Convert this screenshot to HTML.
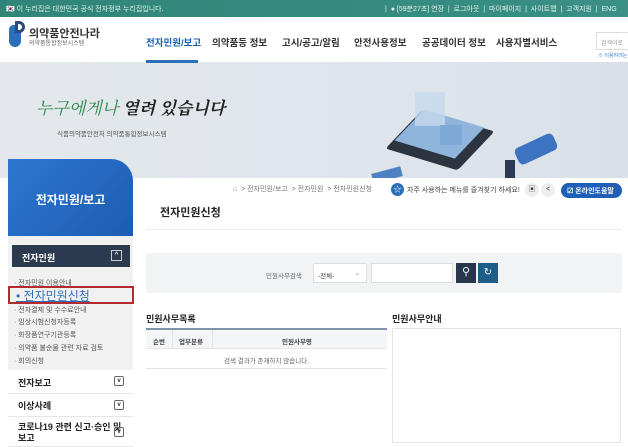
<!DOCTYPE html>
<html><head><meta charset="utf-8"><style>
*{margin:0;padding:0;box-sizing:border-box}
body{width:628px;height:439px;overflow:hidden;font-family:"Liberation Sans","Noto Sans CJK KR",sans-serif;background:#fff;position:relative;color:#333}
.a{position:absolute;white-space:nowrap}
.top{left:0;top:0;width:628px;height:17px;background:linear-gradient(90deg,#2f8577,#3a8f86);color:#e8f3ef;font-size:7px}
.nav{font-size:9.5px;font-weight:bold;color:#333;top:35px}
.li{font-size:7px;color:#555;left:16px}
.side{left:8px;width:125px;background:#fff;border-bottom:1px solid #e6e6e6;font-size:9px;font-weight:bold;color:#222;padding-left:10px}
.chev{position:absolute;right:9px;width:10px;height:10px;border:1px solid #666;border-radius:2px;font-size:6px;text-align:center;line-height:8px;color:#333}
</style></head><body>
<div class="a top"><span class="a" style="left:6px;top:4px">🇰🇷 이 누리집은 대한민국 공식 전자정부 누리집입니다.</span>
<span class="a" style="left:385px;top:4px">|&nbsp; ● [59분27초] 연장 &nbsp;|&nbsp; 로그아웃 &nbsp;|&nbsp; 마이페이지 &nbsp;|&nbsp; 사이트맵 &nbsp;|&nbsp; 고객지원 &nbsp;|&nbsp; ENG</span></div>
<div class="a" style="left:9px;top:25px;width:12px;height:22px;border:3px solid #2a6fb8;border-radius:6px 6px 8px 8px;background:#2a6fb8"></div>
<div class="a" style="left:15px;top:21px;width:10px;height:12px;border:3px solid #2a4b7c;border-radius:0 6px 6px 0;background:#fff"></div>
<div class="a" style="left:29px;top:25px;font-size:11px;font-weight:bold;color:#333">의약품안전나라</div>
<div class="a" style="left:29px;top:38px;font-size:6px;color:#666">의약품통합정보시스템</div>
<div class="a nav" style="left:146px;color:#1a5fb4">전자민원/보고</div>
<div class="a nav" style="left:212px">의약품등 정보</div>
<div class="a nav" style="left:282px">고시/공고/알림</div>
<div class="a nav" style="left:354px">안전사용정보</div>
<div class="a nav" style="left:422px">공공데이터 정보</div>
<div class="a nav" style="left:496px">사용자별서비스</div>
<div class="a" style="left:596px;top:32px;width:40px;height:18px;border:1px solid #ddd;font-size:6px;color:#999;padding:5px 4px">검색어로</div>
<div class="a" style="left:598px;top:52px;font-size:5px;color:#3a7bd5">※ 이용하려는</div>
<div class="a" style="left:0;top:62px;width:628px;height:116px;background:linear-gradient(90deg,#e4e8ec,#dfe5eb 60%,#d9e0e7)"></div>
<div class="a" style="left:146px;top:60px;width:52px;height:3px;background:#2a6fb8"></div>
<div class="a" style="left:36px;top:94px;font-size:17px;font-style:italic;font-family:'Liberation Serif','Noto Serif CJK SC',serif;color:#1e5a3a"><span style="color:#2e8a4a">누구에게나</span> <span style="font-weight:bold;color:#222">열려 있습니다</span></div>
<div class="a" style="left:57px;top:128px;font-size:6.5px;color:#555">식품의약품안전처 의약품통합정보시스템</div>
<div class="a" style="left:395px;top:120px;width:90px;height:40px;background:#2c3440;transform:skewX(-35deg) rotate(14deg);border-radius:3px"></div>
<div class="a" style="left:402px;top:118px;width:75px;height:32px;background:#8fb5dc;transform:skewX(-35deg) rotate(14deg)"></div>
<div class="a" style="left:415px;top:92px;width:30px;height:34px;background:#c5d9ec;opacity:.8"></div>
<div class="a" style="left:440px;top:125px;width:22px;height:20px;background:#7ea9d6"></div>
<div class="a" style="left:515px;top:140px;width:42px;height:18px;background:#3c74c2;border-radius:5px;transform:rotate(-25deg)"></div>
<div class="a" style="left:505px;top:160px;width:10px;height:18px;background:#2a3a55"></div>
<div class="a" style="left:372px;top:170px;width:30px;height:10px;background:#4e80c4;transform:rotate(-15deg)"></div>
<div class="a" style="left:8px;top:159px;width:125px;height:77px;background:linear-gradient(135deg,#2d77d0,#1d5cb4);border-radius:0 22px 0 0;color:#fff;font-size:12px;font-weight:bold;text-align:center;padding-top:32px">전자민원/보고</div>
<div class="a" style="left:133px;top:178px;width:495px;height:261px;background:#fff"></div>
<div class="a" style="left:8px;top:236px;width:125px;height:134px;background:#f1f1f1"></div>
<div class="a" style="left:12px;top:245px;width:118px;height:22px;background:#2b3a4f;color:#fff;font-size:9px;font-weight:bold;padding:6px 0 0 10px">전자민원<span style="position:absolute;right:8px;top:5px;width:11px;height:11px;border:1px solid #ccc;font-size:6px;text-align:center;line-height:9px">^</span></div>
<div class="a li" style="top:278px;left:14px">· 전자민원 이용안내</div>
<div class="a" style="left:8px;top:286px;width:126px;height:18px;border:2px solid #b42a2f"></div>
<div class="a" style="left:16px;top:287px;font-size:12px;color:#2a6fb8;text-decoration:underline">• 전자민원신청</div>
<div class="a li" style="top:305px;left:14px">· 전자결제 및 수수료안내</div>
<div class="a li" style="top:317px;left:14px">· 임상시험신청자등록</div>
<div class="a li" style="top:330px;left:14px">· 화장품연구기관등록</div>
<div class="a li" style="top:343px;left:14px">· 의약품 불순물 관련 자료 검토</div>
<div class="a li" style="top:356px;left:14px">· 회의신청</div>
<div class="a side" style="top:370px;height:24px;padding-top:6px">전자보고<span class="chev" style="top:6px">v</span></div>
<div class="a side" style="top:394px;height:23px;padding-top:5px">이상사례<span class="chev" style="top:6px">v</span></div>
<div class="a side" style="top:417px;height:30px;padding-top:5px;line-height:11px">코로나19 관련 신고·승인 및<br>보고<span class="chev" style="top:10px">v</span></div>
<div class="a" style="left:233px;top:184px;font-size:7px;color:#777">⌂ &nbsp;&gt; 전자민원/보고 &nbsp;&gt; 전자민원 &nbsp;&gt; 전자민원신청</div>
<div class="a" style="left:391px;top:183px;width:13px;height:13px;border-radius:50%;background:#2a6fb8;color:#fff;font-size:8px;text-align:center;line-height:13px">☆</div>
<div class="a" style="left:407px;top:185px;font-size:7px;color:#444">자주 사용하는 메뉴를 즐겨찾기 하세요!</div>
<div class="a" style="left:525px;top:183px;width:14px;height:14px;border-radius:50%;background:#eee;font-size:7px;text-align:center;line-height:14px">▣</div>
<div class="a" style="left:541px;top:183px;width:14px;height:14px;border-radius:50%;background:#eee;font-size:7px;text-align:center;line-height:14px">&lt;</div>
<div class="a" style="left:561px;top:183px;width:61px;height:15px;border-radius:8px;background:#1f5fb8;color:#fff;font-size:7px;font-weight:bold;padding:3px 0 0 6px">☑ 온라인도움말</div>
<div class="a" style="left:160px;top:204px;font-size:11px;font-weight:bold;color:#222">전자민원신청</div>
<div class="a" style="left:146px;top:229px;width:476px;height:1px;background:#eee"></div>
<div class="a" style="left:146px;top:253px;width:476px;height:40px;background:#f2f3f5;border-radius:3px"></div>
<div class="a" style="left:266px;top:270px;font-size:6.5px;color:#666">민원사무검색</div>
<div class="a" style="left:313px;top:263px;width:54px;height:20px;background:#fff;border:1px solid #ddd;font-size:6.5px;color:#444;padding:6px 4px">-전체-<span style="position:absolute;right:6px;top:5px;color:#888">⌄</span></div>
<div class="a" style="left:371px;top:263px;width:82px;height:20px;background:#fff;border:1px solid #ddd"></div>
<div class="a" style="left:456px;top:263px;width:20px;height:20px;background:#27364b;color:#fff;font-size:11px;text-align:center;line-height:19px">⚲</div>
<div class="a" style="left:478px;top:263px;width:20px;height:20px;background:#1d5d86;color:#fff;font-size:10px;text-align:center;line-height:19px">↻</div>
<div class="a" style="left:146px;top:312px;font-size:9px;font-weight:bold;color:#222">민원사무목록</div>
<div class="a" style="left:146px;top:328px;width:241px;height:2px;background:#7e94ac"></div>
<div class="a" style="left:146px;top:330px;width:241px;height:19px;background:#f4f5f7;border-bottom:1px solid #e6e6e6;font-size:6.5px;font-weight:bold;color:#444"><span class="a" style="left:7px;top:6px">순번</span><span class="a" style="left:26px;top:0;width:1px;height:19px;background:#e4e4e4"></span><span class="a" style="left:33px;top:6px">업무분류</span><span class="a" style="left:66px;top:0;width:1px;height:19px;background:#e4e4e4"></span><span class="a" style="left:136px;top:6px">민원사무명</span></div>
<div class="a" style="left:146px;top:349px;width:241px;height:20px;border-bottom:1px solid #e4e4e4;font-size:6.5px;color:#666;text-align:center;padding-top:6px">검색 결과가 존재하지 않습니다.</div>
<div class="a" style="left:392px;top:312px;font-size:9px;font-weight:bold;color:#222">민원사무안내</div>
<div class="a" style="left:392px;top:328px;width:229px;height:115px;border:1px solid #e4e4e4"></div>
</body></html>
